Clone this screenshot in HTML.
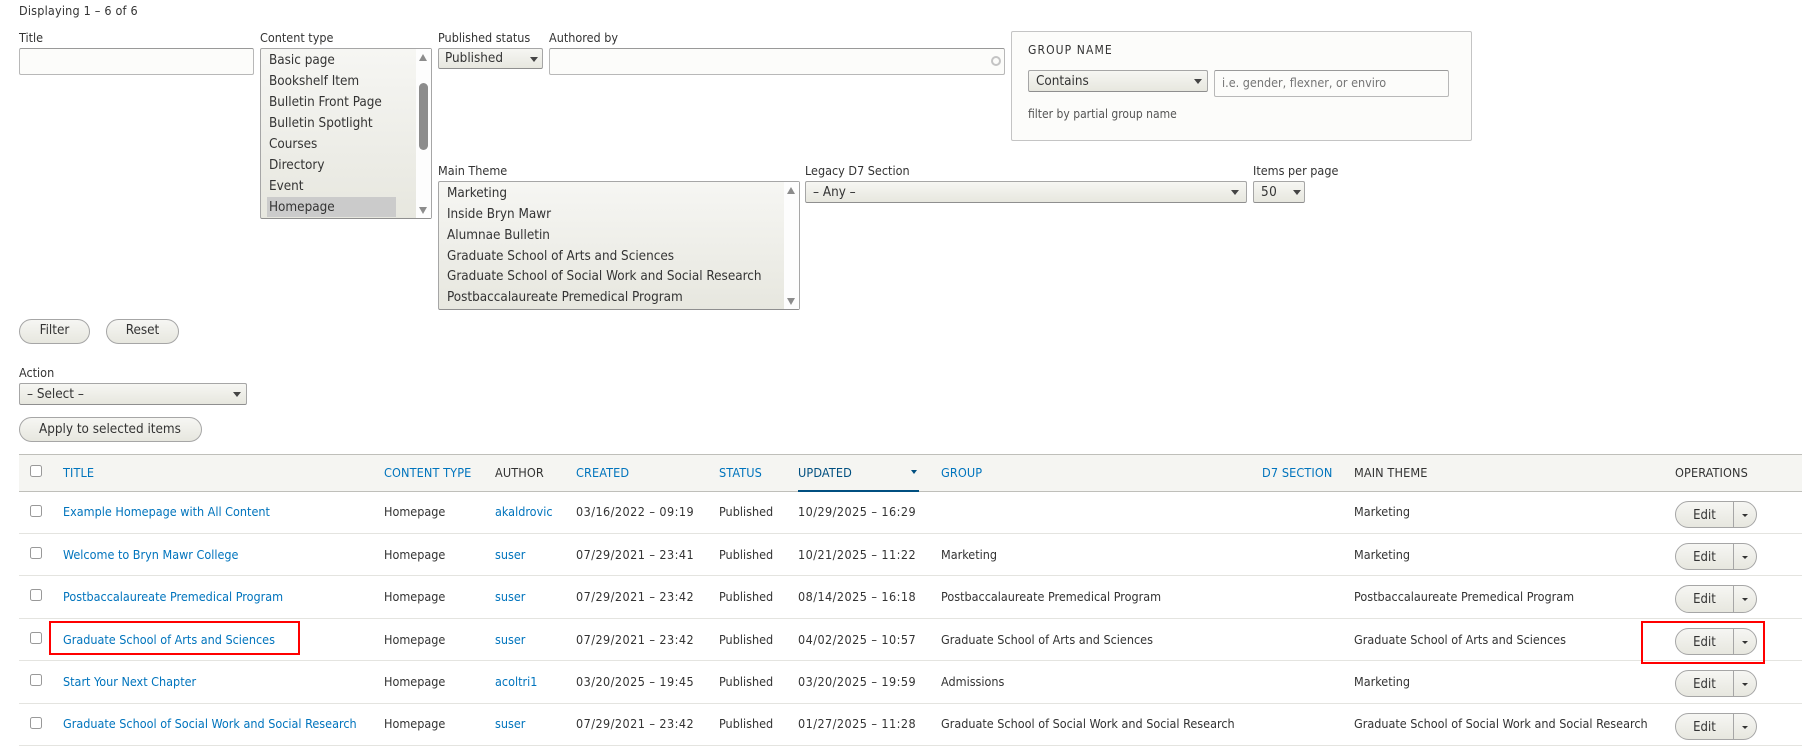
<!DOCTYPE html>
<html lang="en"><head><meta charset="utf-8"><title>Content</title>
<style>
html,body{margin:0;padding:0;background:#fff;width:1802px;height:753px;overflow:hidden}
body{position:relative;font-family:"DejaVu Sans",sans-serif;font-stretch:condensed;font-size:12.5px;color:#333}
.t{position:absolute;line-height:16px;height:16px;white-space:nowrap}
.s{font-size:13.4px}
.n{letter-spacing:.45px}
.h{letter-spacing:.1px;font-size:12.6px}
.l{color:#0074bd}
.d{color:#004f80}
.box{position:absolute;box-sizing:border-box}
.in{border:1px solid #b8b8b8;border-top-color:#999;border-radius:2px;background:#fcfcfa}
.sel{border:1px solid #a6a6a6;border-bottom-color:#8f8f8f;border-radius:2px;background:linear-gradient(#f6f6f3,#e7e7df)}
.btn{border:1px solid #a6a6a6;border-radius:13px;background:linear-gradient(#f6f6f3,#e7e7df)}
.a{position:absolute;width:0;height:0;border-left:4px solid transparent;border-right:4px solid transparent;border-top:5px solid #444}
.su{position:absolute;width:0;height:0;border-left:4.5px solid transparent;border-right:4.5px solid transparent;border-bottom:7px solid #8c8c8c}
.sd{position:absolute;width:0;height:0;border-left:4.5px solid transparent;border-right:4.5px solid transparent;border-top:7px solid #8c8c8c}
.c{position:absolute;box-sizing:border-box;width:12px;height:12px;border:1px solid #999;border-radius:2.5px;background:#fff;left:30px}
.hl{position:absolute;left:19px;width:1783px;height:1px;background:#e4e4e0}
.red{position:absolute;box-sizing:border-box;border:2px solid #f00}
.op{position:absolute;box-sizing:border-box;left:1675px;width:82px;border:1px solid #a6a6a6;border-radius:14px;background:linear-gradient(#f6f6f3,#e7e7df)}
.op i{position:absolute;left:57px;top:0;bottom:0;width:1px;background:#a6a6a6}
.op b{position:absolute;left:66px;top:50%;margin-top:-1px;width:0;height:0;border-left:3px solid transparent;border-right:3px solid transparent;border-top:3px solid #333}
.op span{position:absolute;left:0;width:57px;text-align:center;top:50%;margin-top:-7px;line-height:16px;color:#333;font-size:13px}
</style></head><body>
<div class="t" style="left:19px;top:3px;letter-spacing:.2px">Displaying 1 – 6 of 6</div>

<div class="t" style="left:19px;top:30px">Title</div>
<div class="box in" style="left:19px;top:48px;width:235px;height:27px"></div>

<div class="t" style="left:260px;top:30px">Content type</div>
<div class="box sel" style="left:260px;top:48px;width:172px;height:171px"></div>
<div class="box" style="left:416px;top:49px;width:15px;height:169px;background:#fdfdfd"></div>
<div class="box" style="left:419px;top:83px;width:9px;height:67px;background:#8c8c8c;border-radius:5px"></div>
<div class="su" style="left:419px;top:54px"></div>
<div class="sd" style="left:419px;top:207px"></div>
<div class="box" style="left:267px;top:197px;width:129px;height:20px;background:#cbcbcb"></div>
<div class="t s" style="left:269px;top:53px">Basic page</div>
<div class="t s" style="left:269px;top:74px">Bookshelf Item</div>
<div class="t s" style="left:269px;top:95px">Bulletin Front Page</div>
<div class="t s" style="left:269px;top:116px">Bulletin Spotlight</div>
<div class="t s" style="left:269px;top:137px">Courses</div>
<div class="t s" style="left:269px;top:158px">Directory</div>
<div class="t s" style="left:269px;top:179px">Event</div>
<div class="t s" style="left:269px;top:200px">Homepage</div>

<div class="t" style="left:438px;top:30px">Published status</div>
<div class="box sel" style="left:438px;top:48px;width:105px;height:21px"></div>
<div class="t s" style="left:445px;top:51px">Published</div>
<div class="a" style="left:530px;top:57px"></div>

<div class="t" style="left:549px;top:30px">Authored by</div>
<div class="box in" style="left:549px;top:48px;width:456px;height:27px"></div>
<div class="box" style="left:991px;top:56px;width:10px;height:10px;border:2px solid #c4c4c4;border-radius:50%"></div>

<div class="box" style="left:1011px;top:31px;width:461px;height:110px;border:1px solid #c4c4c4;border-radius:2px;background:#fcfcfa"></div>
<div class="t" style="left:1028px;top:42px;letter-spacing:1.1px;font-size:12px">GROUP NAME</div>
<div class="box sel" style="left:1028px;top:70px;width:180px;height:22px"></div>
<div class="t s" style="left:1036px;top:74px">Contains</div>
<div class="a" style="left:1194px;top:79px"></div>
<div class="box in" style="left:1214px;top:70px;width:235px;height:27px"></div>
<div class="t" style="left:1222px;top:75px;color:#757575">i.e. gender, flexner, or enviro</div>
<div class="t" style="left:1028px;top:106px;font-size:12px;color:#555">filter by partial group name</div>

<div class="t" style="left:438px;top:163px">Main Theme</div>
<div class="box sel" style="left:438px;top:181px;width:362px;height:129px"></div>
<div class="box" style="left:784px;top:182px;width:15px;height:127px;background:#fdfdfd"></div>
<div class="su" style="left:787px;top:187px"></div>
<div class="sd" style="left:787px;top:298px"></div>
<div class="t s" style="left:447px;top:186px">Marketing</div>
<div class="t s" style="left:447px;top:207px">Inside Bryn Mawr</div>
<div class="t s" style="left:447px;top:228px">Alumnae Bulletin</div>
<div class="t s" style="left:447px;top:249px">Graduate School of Arts and Sciences</div>
<div class="t s" style="left:447px;top:269px">Graduate School of Social Work and Social Research</div>
<div class="t s" style="left:447px;top:290px">Postbaccalaureate Premedical Program</div>

<div class="t" style="left:805px;top:163px">Legacy D7 Section</div>
<div class="box sel" style="left:805px;top:181px;width:442px;height:22px"></div>
<div class="t s" style="left:813px;top:185px">– Any –</div>
<div class="a" style="left:1231px;top:190px"></div>

<div class="t" style="left:1253px;top:163px">Items per page</div>
<div class="box sel" style="left:1253px;top:181px;width:52px;height:22px"></div>
<div class="t s n" style="left:1261px;top:185px">50</div>
<div class="a" style="left:1293px;top:190px"></div>

<div class="box btn" style="left:19px;top:319px;width:71px;height:25px"></div>
<div class="t s" style="left:19px;width:71px;text-align:center;top:323px">Filter</div>
<div class="box btn" style="left:106px;top:319px;width:73px;height:25px"></div>
<div class="t s" style="left:106px;width:73px;text-align:center;top:323px">Reset</div>

<div class="t" style="left:19px;top:365px">Action</div>
<div class="box sel" style="left:19px;top:383px;width:228px;height:22px"></div>
<div class="t s" style="left:27px;top:387px">– Select –</div>
<div class="a" style="left:233px;top:392px"></div>

<div class="box btn" style="left:19px;top:417px;width:183px;height:25px"></div>
<div class="t s" style="left:39px;top:422px">Apply to selected items</div>

<div class="box" style="left:19px;top:454px;width:1783px;height:38px;background:#f5f5f2;border-top:1px solid #bfbfba;border-bottom:1px solid #bfbfba"></div>
<div class="c" style="top:465px"></div>
<div class="t h l" style="left:63px;top:465px">TITLE</div>
<div class="t h l" style="left:384px;top:465px">CONTENT TYPE</div>
<div class="t h" style="left:495px;top:465px">AUTHOR</div>
<div class="t h l" style="left:576px;top:465px">CREATED</div>
<div class="t h l" style="left:719px;top:465px">STATUS</div>
<div class="t h d" style="left:798px;top:465px">UPDATED</div>
<div class="a" style="left:911px;top:470px;border-left-width:3.5px;border-right-width:3.5px;border-top:4px solid #004f80"></div>
<div class="box" style="left:798px;top:490px;width:121px;height:2px;background:#004f80"></div>
<div class="t h l" style="left:941px;top:465px">GROUP</div>
<div class="t h l" style="left:1262px;top:465px">D7 SECTION</div>
<div class="t h" style="left:1354px;top:465px">MAIN THEME</div>
<div class="t h" style="left:1675px;top:465px">OPERATIONS</div>

<div class="hl" style="top:533px"></div>
<div class="hl" style="top:575px"></div>
<div class="hl" style="top:618px"></div>
<div class="hl" style="top:660px"></div>
<div class="hl" style="top:703px"></div>
<div class="hl" style="top:745px"></div>

<div class="c" style="top:505px"></div>
<div class="t l" style="left:63px;top:504px">Example Homepage with All Content</div>
<div class="t" style="left:384px;top:504px">Homepage</div>
<div class="t l" style="left:495px;top:504px">akaldrovic</div>
<div class="t n" style="left:576px;top:504px">03/16/2022 – 09:19</div>
<div class="t" style="left:719px;top:504px">Published</div>
<div class="t n" style="left:798px;top:504px">10/29/2025 – 16:29</div>
<div class="t" style="left:1354px;top:504px">Marketing</div>
<div class="op" style="top:501px;height:27px"><span>Edit</span><i></i><b></b></div>

<div class="c" style="top:547px"></div>
<div class="t l" style="left:63px;top:547px">Welcome to Bryn Mawr College</div>
<div class="t" style="left:384px;top:547px">Homepage</div>
<div class="t l" style="left:495px;top:547px">suser</div>
<div class="t n" style="left:576px;top:547px">07/29/2021 – 23:41</div>
<div class="t" style="left:719px;top:547px">Published</div>
<div class="t n" style="left:798px;top:547px">10/21/2025 – 11:22</div>
<div class="t" style="left:941px;top:547px">Marketing</div>
<div class="t" style="left:1354px;top:547px">Marketing</div>
<div class="op" style="top:543px;height:27px"><span>Edit</span><i></i><b></b></div>

<div class="c" style="top:589px"></div>
<div class="t l" style="left:63px;top:589px">Postbaccalaureate Premedical Program</div>
<div class="t" style="left:384px;top:589px">Homepage</div>
<div class="t l" style="left:495px;top:589px">suser</div>
<div class="t n" style="left:576px;top:589px">07/29/2021 – 23:42</div>
<div class="t" style="left:719px;top:589px">Published</div>
<div class="t n" style="left:798px;top:589px">08/14/2025 – 16:18</div>
<div class="t" style="left:941px;top:589px">Postbaccalaureate Premedical Program</div>
<div class="t" style="left:1354px;top:589px">Postbaccalaureate Premedical Program</div>
<div class="op" style="top:585px;height:28px"><span>Edit</span><i></i><b></b></div>

<div class="c" style="top:632px"></div>
<div class="t l" style="left:63px;top:632px">Graduate School of Arts and Sciences</div>
<div class="t" style="left:384px;top:632px">Homepage</div>
<div class="t l" style="left:495px;top:632px">suser</div>
<div class="t n" style="left:576px;top:632px">07/29/2021 – 23:42</div>
<div class="t" style="left:719px;top:632px">Published</div>
<div class="t n" style="left:798px;top:632px">04/02/2025 – 10:57</div>
<div class="t" style="left:941px;top:632px">Graduate School of Arts and Sciences</div>
<div class="t" style="left:1354px;top:632px">Graduate School of Arts and Sciences</div>
<div class="op" style="top:628px;height:27px"><span>Edit</span><i></i><b></b></div>

<div class="c" style="top:674px"></div>
<div class="t l" style="left:63px;top:674px">Start Your Next Chapter</div>
<div class="t" style="left:384px;top:674px">Homepage</div>
<div class="t l" style="left:495px;top:674px">acoltri1</div>
<div class="t n" style="left:576px;top:674px">03/20/2025 – 19:45</div>
<div class="t" style="left:719px;top:674px">Published</div>
<div class="t n" style="left:798px;top:674px">03/20/2025 – 19:59</div>
<div class="t" style="left:941px;top:674px">Admissions</div>
<div class="t" style="left:1354px;top:674px">Marketing</div>
<div class="op" style="top:670px;height:27px"><span>Edit</span><i></i><b></b></div>

<div class="c" style="top:717px"></div>
<div class="t l" style="left:63px;top:716px">Graduate School of Social Work and Social Research</div>
<div class="t" style="left:384px;top:716px">Homepage</div>
<div class="t l" style="left:495px;top:716px">suser</div>
<div class="t n" style="left:576px;top:716px">07/29/2021 – 23:42</div>
<div class="t" style="left:719px;top:716px">Published</div>
<div class="t n" style="left:798px;top:716px">01/27/2025 – 11:28</div>
<div class="t" style="left:941px;top:716px">Graduate School of Social Work and Social Research</div>
<div class="t" style="left:1354px;top:716px">Graduate School of Social Work and Social Research</div>
<div class="op" style="top:713px;height:27px"><span>Edit</span><i></i><b></b></div>

<div class="red" style="left:49px;top:621px;width:251px;height:34px"></div>
<div class="red" style="left:1641px;top:621px;width:124px;height:43px"></div>
</body></html>
